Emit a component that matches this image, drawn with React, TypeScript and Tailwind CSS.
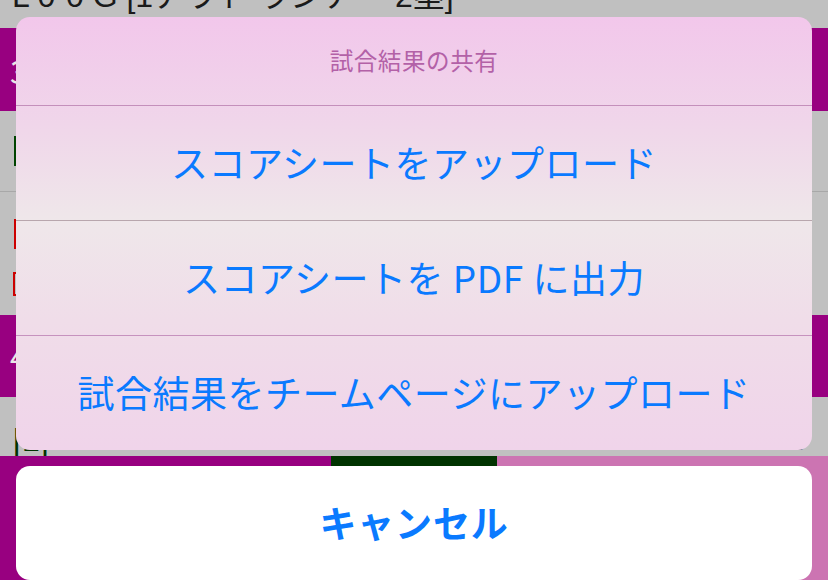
import React from "react";

const jp = { fontFamily: '"Noto Sans CJK JP", "Noto Sans", sans-serif' };
const top = { fontFamily: '"Liberation Sans", "Noto Sans CJK JP", sans-serif' };

export default function App() {
  return (
    <div className="relative w-[828px] h-[580px] overflow-hidden bg-[#c0c0c0]" style={jp}>
      {/* background page */}
      <div className="flex flex-col w-full h-full">
        <div className="h-[28px] bg-[#c0c0c0] overflow-hidden pl-[12px]">
          <div className="text-[32px] leading-[32px] mt-[-20px] text-[#1a1a1a] whitespace-nowrap" style={top}>L 0-0 G [1アウト ランナー 2塁]</div>
        </div>
        <div className="h-[83px] bg-[#980080] flex items-center pl-[10px]">
          <span className="text-[32px] text-[#e8e8e8]">3</span>
        </div>
        <div className="h-[81px] bg-[#c0c0c0] border-b border-[#a8a8a8] flex items-center pl-[14px]">
          <div className="w-[30px] h-[30px] border-2 border-[#004400]" />
        </div>
        <div className="h-[123px] bg-[#c0c0c0] flex flex-col pl-[14px] pt-[27px] gap-[23px]">
          <div className="w-[30px] h-[30px] border-2 border-[#cc0000]" />
          <div className="w-[30px] h-[24px] border-2 border-[#cc0000] ml-[-1px]" />
        </div>
        <div className="h-[82px] bg-[#980080] flex items-center pl-[10px]">
          <span className="text-[30px] text-[#e8e8e8]">4</span>
        </div>
        <div className="h-[59px] bg-[#c0c0c0] flex items-end justify-between pl-[13px] pr-[20px]">
          <span className="text-[32px] leading-[32px] text-[#003300] mb-[0px]" style={top}>[1] ・ ・</span>
          <span className="text-[30px] leading-[30px] text-[#333] mb-[4px]">0</span>
        </div>
        <div className="flex-1 flex">
          <div className="w-[331px] bg-[#980080]" />
          <div className="w-[166px] bg-[#003300]" />
          <div className="flex-1 bg-[#cc74b2]" />
        </div>
      </div>

      {/* action sheet overlay */}
      <div className="absolute inset-0 flex flex-col px-[16px] pt-[17px] gap-[16px]">
        <div className="rounded-[14px] overflow-hidden bg-[linear-gradient(180deg,#f2c7eb_0%,#f0d6ea_25%,#efe7ea_47%,#f0dde9_70%,#f0d4ea_100%)] flex flex-col">
          <div className="h-[88px] flex items-center justify-center text-[23.6px] tracking-[0.5px] text-[#b361a7]">
            試合結果の共有
          </div>
          <div className="h-[115px] border-t border-[#c48fbb] flex items-center justify-center text-[37px] tracking-[0.5px] text-[#0a7aff]">
            スコアシートをアップロード
          </div>
          <div className="h-[115px] border-t border-[#b8a6ad] flex items-center justify-center text-[37px] tracking-[0.5px] text-[#0a7aff]">
            スコアシートを PDF に出力
          </div>
          <div className="h-[115px] border-t border-[#c692be] flex items-center justify-center text-[37px] tracking-[0.5px] text-[#0a7aff]">
            試合結果をチームページにアップロード
          </div>
        </div>
        <div className="h-[114px] shrink-0 rounded-[14px] bg-white flex items-center justify-center text-[37px] tracking-[0.8px] font-bold text-[#0a7aff]">
          キャンセル
        </div>
      </div>
    </div>
  );
}
